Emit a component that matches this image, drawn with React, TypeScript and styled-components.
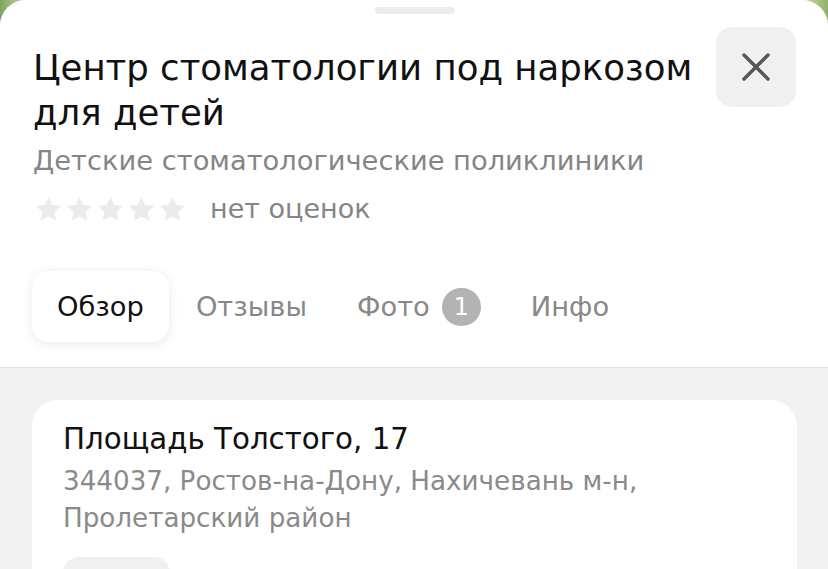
import React from "react";
import styled, { createGlobalStyle } from "styled-components";

const Global = createGlobalStyle`
  html, body { margin: 0; padding: 0; }
  body {
    width: 828px;
    height: 569px;
    overflow: hidden;
    font-family: "DejaVu Sans", "Noto Sans", sans-serif;
    background: linear-gradient(90deg, #7fa35a 0%, #c9dca8 3%, #eef3e4 50%, #c9dca8 97%, #8fb364 100%);
  }
`;

const Sheet = styled.div`
  width: 828px;
  height: 569px;
  background: #f2f2f2;
  border-radius: 26px 26px 0 0;
  overflow: hidden;
  display: flex;
  flex-direction: column;
`;

const Header = styled.div`
  background: #fff;
  padding: 7px 32px 0 33px;
  display: flex;
  flex-direction: column;
  border-bottom: 1px solid #e2e2e2;
`;

const Handle = styled.div`
  align-self: center;
  width: 80px;
  height: 7px;
  border-radius: 4px;
  background: #ececec;
  margin-left: 1px;
`;

const TitleRow = styled.div`
  display: flex;
  align-items: flex-start;
  justify-content: space-between;
  margin-top: 13px;
`;

const Title = styled.h1`
  margin: 18px 0 0 0;
  font-size: 35.5px;
  line-height: 45px;
  font-weight: 400;
  color: #111;
  width: 675px;
`;

const CloseButton = styled.button`
  width: 80px;
  height: 80px;
  border: none;
  border-radius: 16px;
  background: #f0f0f0;
  display: flex;
  align-items: center;
  justify-content: center;
  padding: 0;
  flex-shrink: 0;
`;

const Subtitle = styled.div`
  font-size: 27.3px;
  line-height: 36px;
  color: #858585;
  margin-top: 8px;
`;

const RatingRow = styled.div`
  display: flex;
  align-items: center;
  margin-top: 12px;
`;

const Stars = styled.div`
  display: flex;
  gap: 4px;
  margin-left: 2px;
`;

const RatingText = styled.span`
  font-size: 27px;
  line-height: 36px;
  color: #858585;
  margin-left: 24px;
`;

const Tabs = styled.div`
  display: flex;
  align-items: center;
  margin-top: 44px;
  margin-left: -1px;
  margin-bottom: 25px;
`;

const Tab = styled.div<{ $active?: boolean }>`
  display: flex;
  align-items: center;
  gap: 12px;
  height: 71px;
  padding: 0 25px;
  border-radius: 16px;
  font-size: 27.3px;
  color: ${(p) => (p.$active ? "#111" : "#888")};
  background: ${(p) => (p.$active ? "#fff" : "transparent")};
  box-shadow: ${(p) => (p.$active ? "0 2px 12px rgba(0,0,0,0.09)" : "none")};
  margin-right: ${(p) => (p.$active ? "2px" : "0")};
`;

const Badge = styled.span`
  min-width: 39px;
  height: 38px;
  border-radius: 20px;
  background: #b3b3b3;
  color: #fff;
  font-size: 24px;
  display: flex;
  align-items: center;
  justify-content: center;
`;

const Body = styled.div`
  padding: 32px 31px 0 32px;
  display: flex;
  flex-direction: column;
`;

const Card = styled.div`
  background: #fff;
  border-radius: 26px;
  padding: 19px 31px 0 31px;
  height: 200px;
  display: flex;
  flex-direction: column;
`;

const Street = styled.div`
  font-size: 29.3px;
  line-height: 40px;
  color: #111;
`;

const Address = styled.div`
  font-size: 26.2px;
  line-height: 37px;
  color: #8a8a8a;
  margin-top: 4px;
`;

const ActionChip = styled.div`
  margin-top: 20px;
  width: 107px;
  height: 60px;
  border-radius: 16px;
  background: #f0f0f0;
`;

const Star = () => (
  <svg width="27" height="26" viewBox="0 0 24 23">
    <path
      d="M12 0.8l3.4 7 7.6 1-5.5 5.3 1.4 7.6L12 18.1l-6.9 3.6 1.4-7.6L1 8.8l7.6-1z"
      fill="#ebebeb"
    />
  </svg>
);

export default function App() {
  return (
    <>
      <Global />
      <Sheet>
        <Header>
          <Handle />
          <TitleRow>
            <Title>Центр стоматологии под наркозом для детей</Title>
            <CloseButton aria-label="Закрыть">
              <svg width="30" height="30" viewBox="0 0 30 30">
                <path d="M3 3L27 27M27 3L3 27" stroke="#555" strokeWidth="3.4" strokeLinecap="round" />
              </svg>
            </CloseButton>
          </TitleRow>
          <Subtitle>Детские стоматологические поликлиники</Subtitle>
          <RatingRow>
            <Stars>
              <Star />
              <Star />
              <Star />
              <Star />
              <Star />
            </Stars>
            <RatingText>нет оценок</RatingText>
          </RatingRow>
          <Tabs>
            <Tab $active>Обзор</Tab>
            <Tab>Отзывы</Tab>
            <Tab>
              Фото <Badge>1</Badge>
            </Tab>
            <Tab>Инфо</Tab>
          </Tabs>
        </Header>
        <Body>
          <Card>
            <Street>Площадь Толстого, 17</Street>
            <Address>
              344037, Ростов-на-Дону, Нахичевань м-н,
              <br />
              Пролетарский район
            </Address>
            <ActionChip />
          </Card>
        </Body>
      </Sheet>
    </>
  );
}
